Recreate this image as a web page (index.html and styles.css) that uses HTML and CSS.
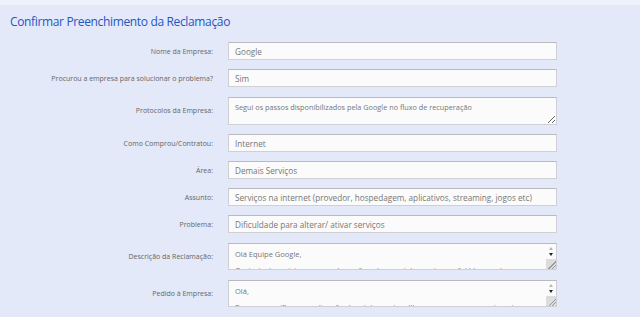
FILE: index.html
```html
<!DOCTYPE html>
<html lang="pt-BR">
<head>
  <meta charset="UTF-8" />
  <meta name="viewport" content="width=device-width, initial-scale=1.0" />
  <title>Confirmar Preenchimento da Reclamação</title>
  <link rel="stylesheet" href="styles.css">
</head>
<body>
  <div class="top-strip"></div>
  <div class="page">
    <h1 class="title">Confirmar Preenchimento da Reclamação</h1>
    <form class="confirm-form">
      <label>Nome da Empresa:</label>
      <input type="text" value="Google" />

      <label>Procurou a empresa para solucionar o problema?</label>
      <input type="text" value="Sim" />

      <label>Protocolos da Empresa:</label>
      <textarea class="small">Segui os passos disponibilizados pela Google no fluxo de recuperação</textarea>

      <label>Como Comprou/Contratou:</label>
      <input type="text" value="Internet" />

      <label>Área:</label>
      <input type="text" value="Demais Serviços" />

      <label>Assunto:</label>
      <input type="text" value="Serviços na internet (provedor, hospedagem, aplicativos, streaming, jogos etc)" />

      <label>Problema:</label>
      <input type="text" value="Dificuldade para alterar/ ativar serviços" />

      <label>Descrição da Reclamação:</label>
      <div class="scroll-field">
        <textarea class="scroll">Olá Equipe Google,
Gostaria de registrar uma reclamação sobre a minha conta que foi bloqueada sem aviso prévio.
Já tentei recuperar o acesso diversas vezes pelo fluxo indicado, sem sucesso.</textarea>
        <div class="fake-bar"><span class="arrow-up"></span><span class="arrow-down"></span><span class="grip"></span></div>
      </div>

      <label>Pedido à Empresa:</label>
      <div class="scroll-field">
        <textarea class="scroll">Olá,
Peço que verifiquem a situação da minha conta e liberem o acesso o quanto antes (2024).
Aguardo retorno.</textarea>
        <div class="fake-bar"><span class="arrow-up"></span><span class="arrow-down"></span><span class="grip"></span></div>
      </div>
    </form>
  </div>
</body>
</html>
```

FILE: styles.css
```css
* {
  margin: 0;
  padding: 0;
  box-sizing: border-box;
}
body {
  background-color: #e3e9f8;
  font-family: 'Open Sans', sans-serif;
  color: #555;
}
.top-strip {
  height: 5px;
  background-color: #eef2fb;
}
.page {
  padding: 8px 10px 0 10px;
}
.title {
  font-size: 12px;
  font-weight: 400;
  color: #1f55c4;
  line-height: 18px;
  letter-spacing: -0.35px;
  margin-bottom: 11px;
}
.confirm-form {
  display: grid;
  grid-template-columns: 203px 329px;
  column-gap: 15px;
  row-gap: 9px;
  align-items: center;
}
.confirm-form label {
  font-size: 7px;
  color: #666;
  text-align: right;
}
.confirm-form input,
.confirm-form textarea {
  width: 329px;
  font-family: 'Open Sans', sans-serif;
  color: #777;
  background-color: #fbfbfb;
  border: 1px solid #cfcfd4;
  border-top-color: #b9b9bf;
  padding: 0 6px;
}
.confirm-form input {
  height: 18px;
  font-size: 8.2px;
}
.confirm-form textarea {
  height: 28px;
  font-size: 7.3px;
  line-height: 12px;
  padding: 3px 6px;
  resize: vertical;
  overflow: hidden;
}
.confirm-form textarea.small {
  margin-top: 1px;
}
.scroll-field {
  position: relative;
  width: 329px;
  height: 27px;
  margin-top: 1px;
}
.confirm-form textarea.scroll {
  display: block;
  height: 27px;
  font-size: 7.5px;
  line-height: 16px;
  padding: 2px 16px 0 6px;
  resize: none;
}
.fake-bar {
  position: absolute;
  top: 1px;
  right: 1px;
  bottom: 1px;
  width: 10px;
  display: flex;
  flex-direction: column;
  align-items: center;
  background: #fbfbfb;
}
.arrow-up {
  margin-top: 3px;
  width: 0;
  height: 0;
  border-left: 2.5px solid transparent;
  border-right: 2.5px solid transparent;
  border-bottom: 3px solid #b5b5b5;
}
.arrow-down {
  margin-top: 3px;
  width: 0;
  height: 0;
  border-left: 2.5px solid transparent;
  border-right: 2.5px solid transparent;
  border-top: 3px solid #222;
}
.grip {
  margin-top: auto;
  width: 10px;
  height: 10px;
  background:
    linear-gradient(135deg, transparent 60%, #999 60%, #999 66%, transparent 66%, transparent 78%, #999 78%, #999 84%, transparent 84%),
    #dcdcdc;
}
```
